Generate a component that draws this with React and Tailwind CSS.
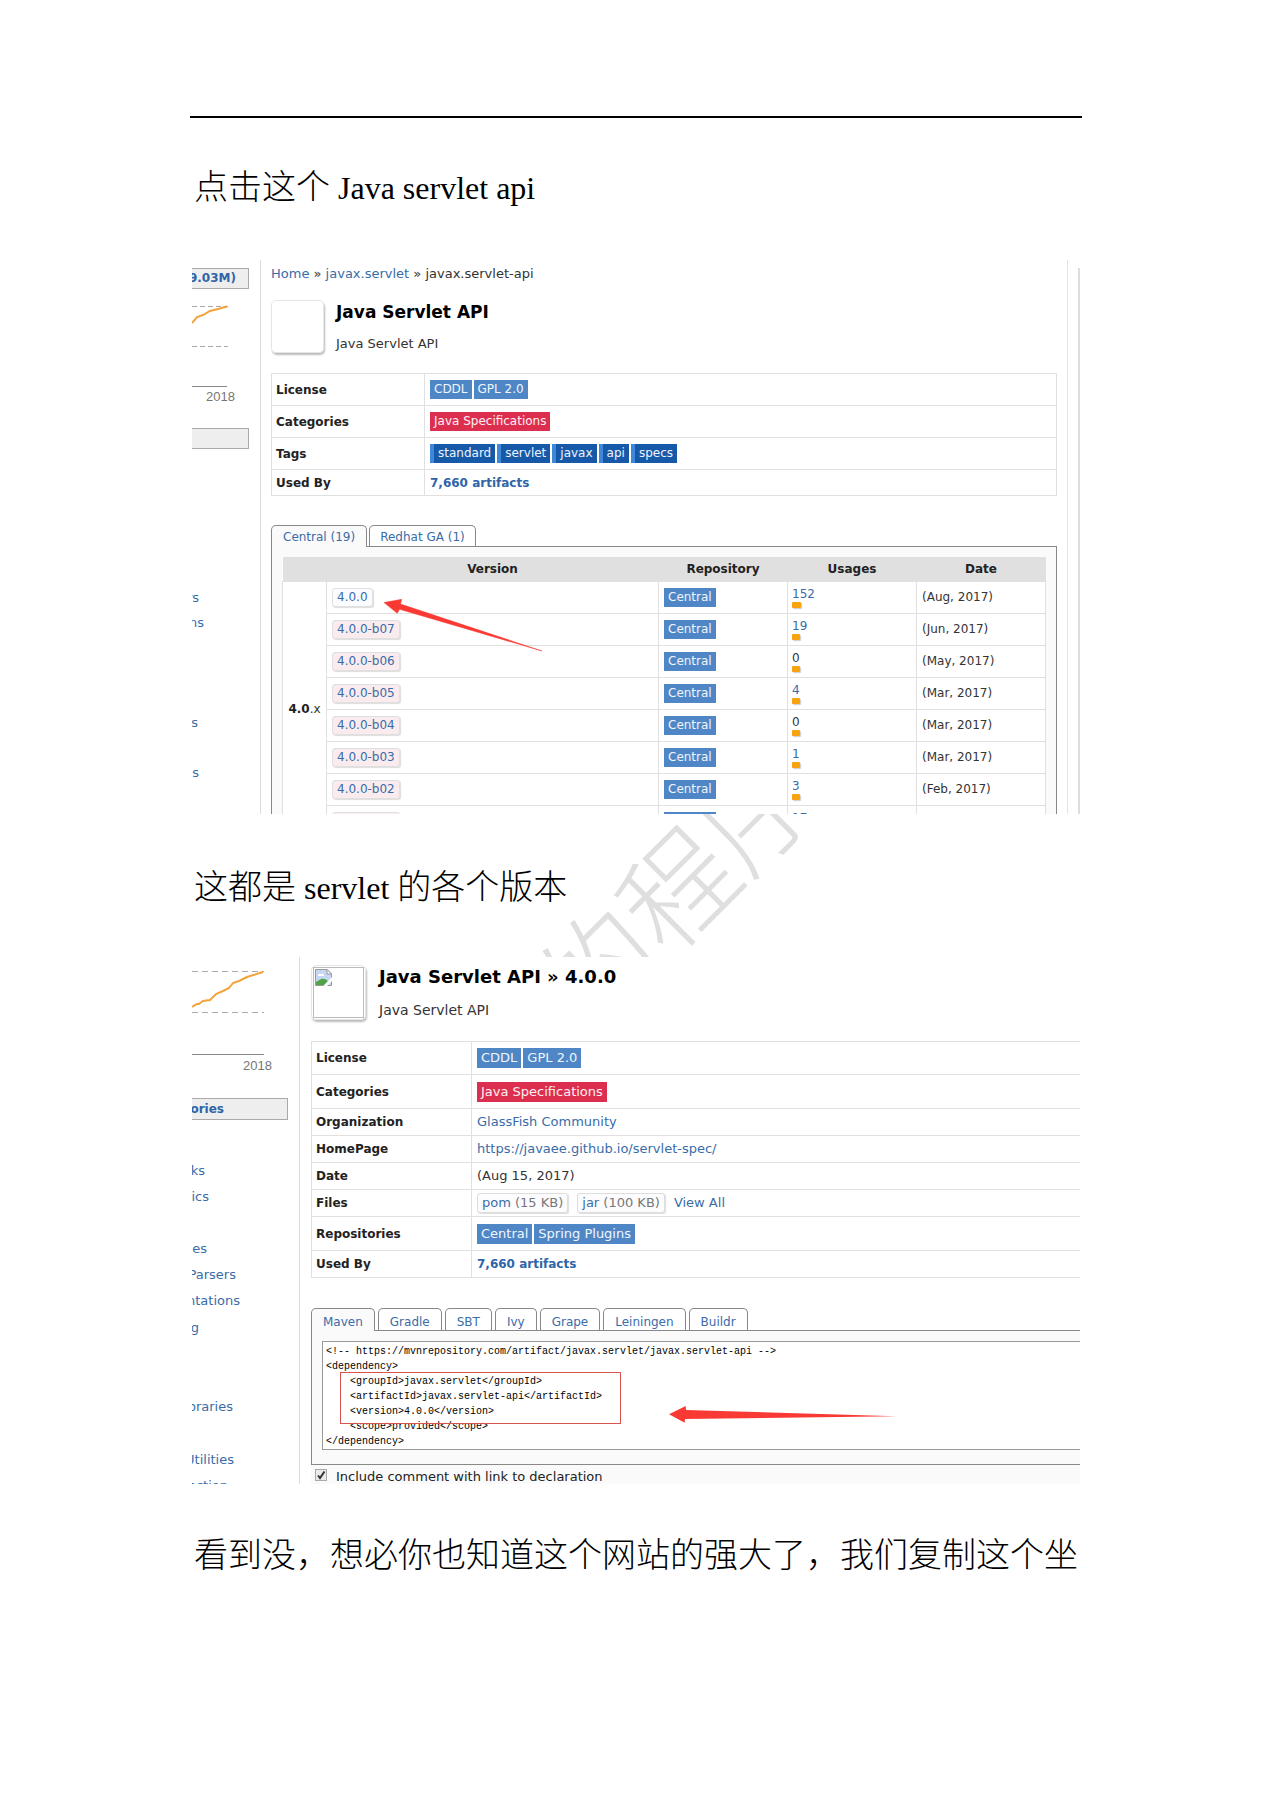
import React from "react";

const bodyFont = "font-['Liberation_Serif','Noto_Sans_CJK_SC',serif]";
const uiFont = "font-['DejaVu_Sans',sans-serif]";
const link = "text-[#3a6ca8]";

const blueChip = "inline-block h-[19px] bg-[#4f86c6] px-1 text-[12px] leading-[19px] text-[#f0f6fd]";
const blueChipLg = "inline-block h-5 bg-[#4f86c6] px-1 text-[13px] leading-5 text-[#f0f6fd]";

function Paragraph({ children }) {
  return (
    <p className={`px-1 text-[34px] leading-[44px] font-light whitespace-nowrap text-black ${bodyFont}`}>{children}</p>
  );
}

function Latin({ children }) {
  return <span className="text-[32px] font-normal">{children}</span>;
}

function CutWord({ width, row, children }) {
  return (
    <li className={row}>
      <a href="#" className={`flex justify-end overflow-hidden ${width} ${link}`}>
        <span>{children}</span>
      </a>
    </li>
  );
}

const versions = [
  ["4.0.0", "152", "(Aug, 2017)"],
  ["4.0.0-b07", "19", "(Jun, 2017)"],
  ["4.0.0-b06", "0", "(May, 2017)"],
  ["4.0.0-b05", "4", "(Mar, 2017)"],
  ["4.0.0-b04", "0", "(Mar, 2017)"],
  ["4.0.0-b03", "1", "(Mar, 2017)"],
  ["4.0.0-b02", "3", "(Feb, 2017)"],
  ["4.0.0-b01", "17", "(Feb, 2017)"],
];

function InfoRow({ label, height, children, cell }) {
  return (
    <tr className={height}>
      <th scope="row" className={`border border-[#e0e0e0] pl-1 text-left text-[12px] font-bold text-[#222] ${cell}`}>{label}</th>
      <td className="border border-[#e0e0e0] pl-[5px]">{children}</td>
    </tr>
  );
}

function ArtifactPage() {
  return (
    <section className={`relative mx-[2px] flex h-[554px] overflow-hidden bg-white text-[12px] text-[#333] ${uiFont}`}>
      <aside className="w-[69px] shrink-0 border-r border-[#ddd] pt-2">
        <div className="flex h-[21px] w-[57px] justify-end overflow-hidden border border-l-0 border-[#aaa] bg-[#eee] pr-3">
          <b className="text-[12px] leading-[19px] text-[#2f65a8]">9.03M)</b>
        </div>
        <svg className="mt-[10px] block" width="60" height="88" viewBox="0 0 60 88" fill="none">
          <path d="M0 7.5H36M0 47.5H36" stroke="#aaa" strokeDasharray="5 3" />
          <path d="M0 87.500H35" stroke="#888" />
          <path d="M0 24 5 18 11 16 18 12 26 10 35 7.5" stroke="#f2a33a" strokeWidth="2" />
        </svg>
        <div className="pl-[14px] pt-px font-['Liberation_Sans',sans-serif] text-[13px] leading-[18px] text-[#777]">2018</div>
        <div className="mt-[22px] h-[21px] w-[57px] border border-l-0 border-[#aaa] bg-[#eee]" />
        <ul className="mt-[136px] text-[13px] leading-[25px]">
          <CutWord width="w-[7px]" row="h-[25px]">rs</CutWord>
          <CutWord width="w-3" row="h-[100px]">ns</CutWord>
          <CutWord width="w-[6px]" row="h-[50px]">s</CutWord>
          <CutWord width="w-[7px]" row="h-[25px]">s</CutWord>
        </ul>
      </aside>

      <div className="min-w-0 flex-1 border-r border-[#e3e3e3] pr-[10px] pl-[10px]">
        <nav className="pt-1 text-[13px] leading-[20px]">
          <a href="#" className={link}>Home</a> » <a href="#" className={link}>javax.servlet</a> » javax.servlet-api
        </nav>
        <header className="mt-4 flex gap-3">
          <div className="h-[53px] w-[53px] rounded-[5px] border border-[#e6e6e6] shadow-[1px_2px_2px_#bbb]" />
          <div>
            <h2 className="pt-px text-[17px] leading-[22px] font-bold text-black">Java Servlet API</h2>
            <p className="mt-[11px] text-[13px] leading-[20px]">Java Servlet API</p>
          </div>
        </header>
        <table className="mt-[19px] w-full border-collapse">
          <tbody>
            <InfoRow label="License" height="h-8" cell="w-[153px]">
              <div className="flex gap-[2px]"><a href="#" className={blueChip}>CDDL</a><a href="#" className={blueChip}>GPL 2.0</a></div>
            </InfoRow>
            <InfoRow label="Categories" height="h-8" cell="w-[153px]">
              <div className="flex"><a href="#" className="h-[19px] bg-[#dc2f50] px-1 leading-[19px] text-[#fdf0f2]">Java Specifications</a></div>
            </InfoRow>
            <InfoRow label="Tags" height="h-8" cell="w-[153px]">
              <div className="flex gap-[2px]">
                {["standard", "servlet", "javax", "api", "specs"].map((t) => (
                  <a key={t} href="#" className="h-[19px] border-l-4 border-[#3f87da] bg-[#1759a9] px-1 leading-[19px] text-[#edf4fc]">{t}</a>
                ))}
              </div>
            </InfoRow>
            <InfoRow label="Used By" height="h-[26px]" cell="w-[153px]">
              <a href="#" className="block font-bold text-[#2f65a8]">7,660 artifacts</a>
            </InfoRow>
          </tbody>
        </table>

        <div className="mt-[29px] flex gap-[2px]" role="tablist">
          <button type="button" role="tab" aria-selected="true" className={`z-10 -mb-px h-[22px] rounded-t-[5px] border border-b-0 border-[#888] bg-[#fafafa] px-[11px] pt-[2px] leading-[19px] ${link}`}>Central (19)</button>
          <button type="button" role="tab" aria-selected="false" className={`h-[21px] rounded-t-[5px] border border-b-0 border-[#888] bg-white px-[10px] pt-[2px] leading-[19px] ${link}`}>Redhat GA (1)</button>
        </div>
        <div className="border border-[#888] bg-[#fafafa] px-[10px] pt-[10px]">
          <table className="w-full table-fixed border-collapse bg-white">
            <colgroup>
              <col className="w-[44px]" /><col /><col className="w-[129px]" /><col className="w-[129px]" /><col className="w-[129px]" />
            </colgroup>
            <thead>
              <tr className="h-6 bg-[#e0e0e0] text-[#222]">
                <th /><th>Version</th><th>Repository</th><th>Usages</th><th>Date</th>
              </tr>
            </thead>
            <tbody>
              {versions.map(([v, n, d], i) => (
                <tr key={v} className="h-8">
                  {i === 0 && (
                    <td rowSpan={8} className="border border-[#e0e0e0] text-center"><b className="text-[#222]">4.0</b>.x</td>
                  )}
                  <td className="border border-[#e0e0e0] pl-[5px]">
                    <div className="flex">
                      <a href="#" className={`h-[19px] rounded-[3px] border border-[#e0e0e0] px-1 leading-[17px] shadow-[1px_1px_1px_#ddd] ${link} ${i === 0 ? "bg-[#fafcff]" : "bg-[#f9ebee]"}`}>{v}</a>
                    </div>
                  </td>
                  <td className="border border-[#e0e0e0] pl-[5px]"><div className="flex"><a href="#" className={blueChip}>Central</a></div></td>
                  <td className="border border-[#e0e0e0] pl-1">
                    <div className={`leading-[15px] ${n === "0" ? "text-[#333]" : link}`}>{n}</div>
                    <div className={`h-[6px] rounded-[1px] bg-[#f6a30c] shadow-[1px_1px_1px_#ccc] ${i === 0 ? "w-[9px]" : "w-2"}`} />
                  </td>
                  <td className="border border-[#e0e0e0] pl-[5px]">{d}</td>
                </tr>
              ))}
            </tbody>
          </table>
        </div>
      </div>
      <div className="mt-2 w-3 shrink-0 border-r-2 border-[#ddd]" />
      <svg className="absolute top-[336px] left-[190px]" width="162" height="58" viewBox="0 0 162 58">
        <path d="M2 6.500 19.700 3.300 18.500 8 160 55 17.500 13.300 15.300 17.300Z" fill="#f93a34" stroke="#f93a34" strokeWidth=".5" />
      </svg>
    </section>
  );
}

const code = `<!-- https://mvnrepository.com/artifact/javax.servlet/javax.servlet-api -->
<dependency>
    <groupId>javax.servlet</groupId>
    <artifactId>javax.servlet-api</artifactId>
    <version>4.0.0</version>
    <scope>provided</scope>
</dependency>`;

const fileChip = "h-5 rounded-[3px] border border-[#ddd] bg-[#fcfcfe] px-1 leading-[18px] text-[#777] shadow-[1px_1px_1px_#ddd]";

function VersionPage() {
  return (
    <section className={`relative mx-[2px] flex h-[527px] overflow-hidden bg-white text-[12px] text-[#333] ${uiFont}`}>
      <aside className="w-[108px] shrink-0 border-r border-[#ddd]">
        <svg className="block" width="90" height="98" viewBox="0 0 90 98" fill="none">
          <path d="M0 14.500H72M0 55.500H72" stroke="#aaa" strokeDasharray="6 4" />
          <path d="M0 97.500H72" stroke="#888" />
          <path d="M0 50 5 47 7 47 11 44 18 43 24 37 31 34 37 31 41 26 47 24 55 20 71 15" stroke="#f2a33a" strokeWidth="2" />
        </svg>
        <div className="pl-[51px] pt-[2px] font-['Liberation_Sans',sans-serif] text-[13px] leading-[18px] text-[#777]">2018</div>
        <div className="mt-[23px] h-[22px] w-24 border border-l-0 border-[#aaa] bg-[#eee]">
          <div className="flex w-8 justify-end overflow-hidden"><b className="text-[12px] leading-5 text-[#2f65a8]">ories</b></div>
        </div>
        <ul className="mt-[38px] text-[13px] leading-[26px]">
          <CutWord width="w-[13px]" row="h-[26px]">ks</CutWord>
          <CutWord width="w-[17px]" row="h-[52px]">ics</CutWord>
          <CutWord width="w-[15px]" row="h-[26px]">es</CutWord>
          <CutWord width="w-11" row="h-[26px]">Parsers</CutWord>
          <CutWord width="w-12" row="h-[27px]">ntations</CutWord>
          <CutWord width="w-[7px]" row="h-[79px]">g</CutWord>
          <CutWord width="w-[41px]" row="h-[53px]">braries</CutWord>
          <CutWord width="w-[42px]" row="h-[26px]">Utilities</CutWord>
          <CutWord width="w-9" row="h-[26px]">ection</CutWord>
        </ul>
      </aside>

      <div className="min-w-0 flex-1 pl-[11px]">
        <header className="flex gap-[13px] pt-2">
          <div className="h-[55px] w-[55px] rounded-[5px] border border-[#e6e6e6] p-px shadow-[1px_2px_2px_#bbb]">
            <div className="h-full border border-[#bbb] p-px">
              <svg width="17" height="17" viewBox="0 0 17 17" role="img" aria-label="missing picture">
                <path d="M.5.500H12L16.500 5V16.500H.5Z" fill="#c6d6f3" stroke="#999" />
                <path d="M12 .5V5H16.500Z" fill="#fff" stroke="#999" />
                <path d="M3 7a2 2 0 0 1 3-2 2 2 0 0 1 3 2Z" fill="#fff" />
                <path d="M1 16V13L6 10Q10 9 13 12L9 16Z" fill="#4fa546" />
                <path d="M17 8 8.500 17H12L17 12Z" fill="#fff" />
              </svg>
            </div>
          </div>
          <div>
            <h2 className="text-[18px] leading-[24px] font-bold text-black">Java Servlet API » 4.0.0</h2>
            <p className="mt-[11px] text-[14px] leading-[20px]">Java Servlet API</p>
          </div>
        </header>
        <div className="-mr-1">
          <table className="mt-[21px] w-full border-collapse text-[13px]">
            <tbody>
              <InfoRow label="License" height="h-[33px]" cell="w-40">
                <div className="flex gap-[2px]"><a href="#" className={blueChipLg}>CDDL</a><a href="#" className={blueChipLg}>GPL 2.0</a></div>
              </InfoRow>
              <InfoRow label="Categories" height="h-[34px]" cell="w-40">
                <div className="flex"><a href="#" className="h-5 bg-[#dc2f50] px-1 leading-5 text-[#fdf0f2]">Java Specifications</a></div>
              </InfoRow>
              <InfoRow label="Organization" height="h-[27px]" cell="w-40"><a href="#" className={link}>GlassFish Community</a></InfoRow>
              <InfoRow label="HomePage" height="h-[27px]" cell="w-40"><a href="#" className={link}>https://javaee.github.io/servlet-spec/</a></InfoRow>
              <InfoRow label="Date" height="h-[27px]" cell="w-40">(Aug 15, 2017)</InfoRow>
              <InfoRow label="Files" height="h-[27px]" cell="w-40">
                <div className="flex gap-[9px]">
                  <a href="#" className={fileChip}><span className={link}>pom</span> (15 KB)</a>
                  <a href="#" className={fileChip}><span className={link}>jar</span> (100 KB)</a>
                  <a href="#" className={link}>View All</a>
                </div>
              </InfoRow>
              <InfoRow label="Repositories" height="h-[34px]" cell="w-40">
                <div className="flex gap-[2px]"><a href="#" className={blueChipLg}>Central</a><a href="#" className={blueChipLg}>Spring Plugins</a></div>
              </InfoRow>
              <InfoRow label="Used By" height="h-[27px]" cell="w-40">
                <a href="#" className="block text-[12px] font-bold text-[#2f65a8]">7,660 artifacts</a>
              </InfoRow>
            </tbody>
          </table>
        </div>

        <div className="mt-[30px] flex gap-[3px]" role="tablist">
          {["Maven", "Gradle", "SBT", "Ivy", "Grape", "Leiningen", "Buildr"].map((t, i) => (
            <button
              key={t}
              type="button"
              role="tab"
              aria-selected={i === 0}
              className={`rounded-t-[5px] border border-b-0 border-[#888] px-[11px] pt-[3px] text-[12px] leading-[20px] ${link} ${i === 0 ? "z-10 -mb-px h-[23px] bg-[#fafafa]" : "h-[22px] bg-white"}`}
            >
              {t}
            </button>
          ))}
        </div>
        <div className="border border-r-0 border-[#888] bg-[#fafafa] pt-[10px] pb-[14px] pl-[10px]">
          <textarea
            aria-label="Maven dependency"
            readOnly
            defaultValue={code}
            className="block h-[109px] w-full resize-none overflow-hidden border border-r-0 border-[#999] bg-white px-[3px] pt-[2px] font-['Liberation_Mono',monospace] text-[10px] leading-[15px] whitespace-pre text-black outline-none"
          />
        </div>
        <div className="flex h-6 bg-[#fafafa] pt-1 pl-1">
          <span className="relative h-3 w-3">
            <input id="comment" type="checkbox" defaultChecked className="block h-3 w-3 appearance-none border border-[#aaa] bg-[#eaeaea]" />
            <svg className="pointer-events-none absolute inset-0" width="12" height="12" viewBox="0 0 12 12">
              <path d="M3 6.500 5 9 9.500 2.500" fill="none" stroke="#333" strokeWidth="2" />
            </svg>
          </span>
          <label htmlFor="comment" className="pl-[9px] text-[13px] leading-[16px] text-[#222]">Include comment with link to declaration</label>
        </div>
      </div>
      <div className="pointer-events-none absolute top-[415px] left-[148px] h-[52px] w-[281px] border border-[#d9534f]" />
      <svg className="absolute top-[446px] left-[475px]" width="232" height="22" viewBox="0 0 232 22">
        <path d="M2 11.300 18.700 3 19 7 229 13.300 18 16 17.700 19.700Z" fill="#f93a34" />
      </svg>
    </section>
  );
}

export default function App() {
  return (
    <main className="mx-auto w-full max-w-[892px] pt-[116px] pb-16">
      <hr className="border-t-2 border-black" />
      <div className="pt-12 pb-[50px]">
        <Paragraph>点击这个<Latin> Java servlet api</Latin></Paragraph>
      </div>
      <ArtifactPage />
      <div className="relative overflow-hidden pt-[52px] pb-[47px]">
        <div aria-hidden="true" className="absolute top-[-10px] left-[315px] w-[336px] -rotate-45 text-center font-['Noto_Sans_CJK_SC',sans-serif] text-[112px] leading-[160px] font-light whitespace-nowrap text-[#dfdfdf]">的程序</div>
        <div className="relative">
          <Paragraph>这都是<Latin> servlet </Latin>的各个版本</Paragraph>
        </div>
      </div>
      <VersionPage />
      <div className="pt-[50px]">
        <Paragraph>看到没，想必你也知道这个网站的强大了，我们复制这个坐</Paragraph>
      </div>
    </main>
  );
}
